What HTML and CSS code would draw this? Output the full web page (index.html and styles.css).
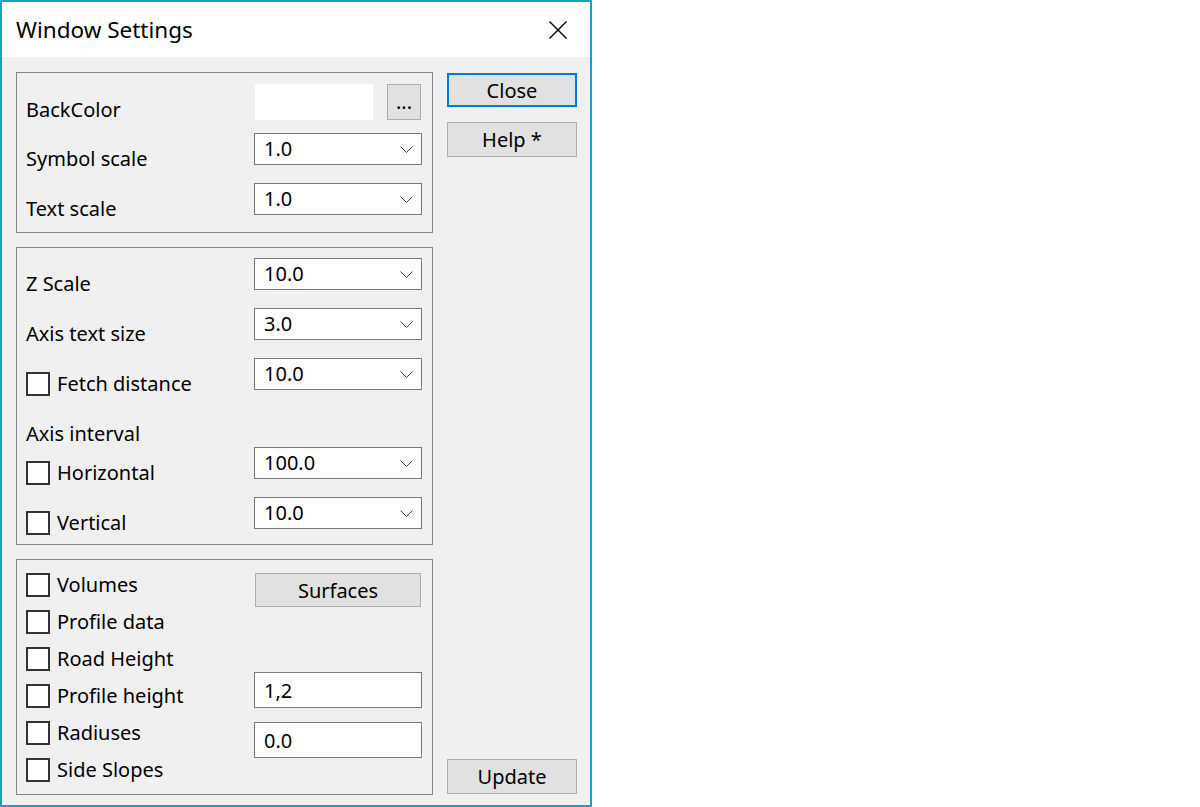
FILE: index.html
```html
<!DOCTYPE html>
<html lang="en">

<head>
    <meta charset="UTF-8">
    <meta name="viewport" content="width=device-width, initial-scale=1.0">
    <title>Window Settings</title>
    <link rel="stylesheet" href="styles.css">
</head>

<body>
    <div class="window">
        <div class="titlebar">
            <span class="title">Window Settings</span>
            <svg class="close-x" width="18" height="18" viewBox="0 0 18 18">
                <path d="M0.5 0.5 L17.5 17.5 M17.5 0.5 L0.5 17.5" stroke="#000" stroke-width="1.4" fill="none" />
            </svg>
        </div>
        <div class="content">
            <div class="groups">
                <!-- colors and scales -->
                <div class="group g1">
                    <div class="row r49">
                        <div class="lbl">BackColor</div>
                        <div class="ctrl color-pick">
                            <div class="swatch"></div>
                            <button class="btn dots">...</button>
                        </div>
                    </div>
                    <div class="row r50">
                        <div class="lbl">Symbol scale</div>
                        <div class="ctrl combo"><span>1.0</span><svg width="13" height="7" viewBox="0 0 13 7"><polyline points="0.5,0.5 6.5,6.5 12.5,0.5" /></svg></div>
                    </div>
                    <div class="row last">
                        <div class="lbl">Text scale</div>
                        <div class="ctrl combo"><span>1.0</span><svg width="13" height="7" viewBox="0 0 13 7"><polyline points="0.5,0.5 6.5,6.5 12.5,0.5" /></svg></div>
                    </div>
                </div>

                <!-- axis -->
                <div class="group g2">
                    <div class="row r50">
                        <div class="lbl">Z Scale</div>
                        <div class="ctrl combo"><span>10.0</span><svg width="13" height="7" viewBox="0 0 13 7"><polyline points="0.5,0.5 6.5,6.5 12.5,0.5" /></svg></div>
                    </div>
                    <div class="row r50">
                        <div class="lbl">Axis text size</div>
                        <div class="ctrl combo"><span>3.0</span><svg width="13" height="7" viewBox="0 0 13 7"><polyline points="0.5,0.5 6.5,6.5 12.5,0.5" /></svg></div>
                    </div>
                    <div class="row r50">
                        <label class="lbl"><input type="checkbox" class="cb">Fetch distance</label>
                        <div class="ctrl combo"><span>10.0</span><svg width="13" height="7" viewBox="0 0 13 7"><polyline points="0.5,0.5 6.5,6.5 12.5,0.5" /></svg></div>
                    </div>
                    <div class="row r39">
                        <div class="lbl">Axis interval</div>
                    </div>
                    <div class="row r50">
                        <label class="lbl"><input type="checkbox" class="cb">Horizontal</label>
                        <div class="ctrl combo"><span>100.0</span><svg width="13" height="7" viewBox="0 0 13 7"><polyline points="0.5,0.5 6.5,6.5 12.5,0.5" /></svg></div>
                    </div>
                    <div class="row last">
                        <label class="lbl"><input type="checkbox" class="cb">Vertical</label>
                        <div class="ctrl combo"><span>10.0</span><svg width="13" height="7" viewBox="0 0 13 7"><polyline points="0.5,0.5 6.5,6.5 12.5,0.5" /></svg></div>
                    </div>
                </div>

                <!-- show options -->
                <div class="group g3">
                    <div class="checks">
                        <label class="check"><input type="checkbox" class="cb">Volumes</label>
                        <label class="check"><input type="checkbox" class="cb">Profile data</label>
                        <label class="check"><input type="checkbox" class="cb">Road Height</label>
                        <label class="check"><input type="checkbox" class="cb">Profile height</label>
                        <label class="check"><input type="checkbox" class="cb">Radiuses</label>
                        <label class="check"><input type="checkbox" class="cb">Side Slopes</label>
                    </div>
                    <div class="g3-ctrls">
                        <button class="btn surfaces">Surfaces</button>
                        <input type="text" class="txt first" value="1,2">
                        <input type="text" class="txt" value="0.0">
                    </div>
                </div>
            </div>

            <div class="side">
                <button class="btn side-btn default">Close</button>
                <button class="btn side-btn help">Help *</button>
                <button class="btn side-btn update">Update</button>
            </div>
        </div>
    </div>
</body>

</html>
```

FILE: styles.css
```css
body {
    margin: 0;
    background: #fff;
    font-family: "Noto Sans", "Segoe UI", sans-serif;
    font-size: 20px;
    color: #000;
}

.window {
    width: 592px;
    height: 807px;
    box-sizing: border-box;
    border: 2px solid #18a1c4;
    display: flex;
    flex-direction: column;
}

.titlebar {
    flex: none;
    height: 55px;
    background: #fff;
    display: flex;
    align-items: center;
    justify-content: space-between;
    padding: 0 23px 0 14px;
}

.title {
    font-size: 22.5px;
    margin-top: -1px;
}

.close-x {
    margin-top: 1px;
}

.content {
    flex: 1;
    min-height: 0;
    background: #f0f0f0;
    display: flex;
    gap: 14px;
    padding: 15px 13px 10px 14px;
}

.groups {
    width: 417px;
    display: flex;
    flex-direction: column;
    gap: 14px;
}

.group {
    border: 1px solid #848484;
    padding: 11px 10px 16px 9px;
}

.g2 {
    padding: 10px 10px 14px 9px;
}

.g3 {
    display: flex;
    justify-content: space-between;
    padding: 13px 10px 12px 9px;
}

.row {
    display: flex;
    align-items: flex-start;
}

.r49 {
    height: 49px;
}

.r50 {
    height: 50px;
}

.r39 {
    height: 39px;
}

.last {
    height: 33px;
}

.lbl {
    flex: 1;
    display: flex;
    align-items: center;
    gap: 7px;
    margin-top: 14px;
    height: 24px;
    line-height: 24px;
}

.ctrl {
    width: 168px;
    box-sizing: border-box;
}

.color-pick {
    display: flex;
    justify-content: space-between;
    padding: 0 1px;
}

.swatch {
    width: 118px;
    height: 36px;
    background: #fff;
}

.combo {
    height: 32px;
    background: #fff;
    border: 1px solid #7a7a7a;
    display: flex;
    align-items: center;
    justify-content: space-between;
    padding: 0 8px 0 9px;
}

.combo span {
    line-height: 24px;
    margin-top: -1px;
}

.combo svg polyline {
    fill: none;
    stroke: #3c3c3c;
    stroke-width: 1;
}

.cb {
    appearance: none;
    -webkit-appearance: none;
    margin: 0;
    width: 24px;
    height: 24px;
    box-sizing: border-box;
    border: 2px solid #333;
    background: #fff;
    flex: none;
}

.btn {
    font-family: inherit;
    font-size: 20px;
    color: #000;
    background: #e1e1e1;
    border: 1px solid #adadad;
    padding: 0;
    margin: 0;
}

.dots {
    width: 34px;
    height: 36px;
    line-height: 20px;
}

.checks {
    display: flex;
    flex-direction: column;
    gap: 13px;
}

.check {
    display: flex;
    align-items: center;
    gap: 7px;
    height: 24px;
    line-height: 24px;
}

.g3-ctrls {
    width: 168px;
    display: flex;
    flex-direction: column;
}

.surfaces {
    width: 166px;
    height: 34px;
    margin: 0 1px;
}

.txt {
    font-family: inherit;
    font-size: 20px;
    color: #000;
    height: 36px;
    box-sizing: border-box;
    border: 1px solid #7a7a7a;
    background: #fff;
    margin: 14px 0 0;
    padding: 0 9px;
    outline: none;
}

.txt.first {
    margin-top: 65px;
}

.side {
    width: 130px;
    display: flex;
    flex-direction: column;
}

.side-btn {
    width: 130px;
    height: 35px;
}

.default {
    height: 34px;
    margin-top: 1px;
    border: 2px solid #0078d7;
}

.help {
    margin-top: 15px;
}

.update {
    margin-top: auto;
    margin-bottom: 1px;
}
```
